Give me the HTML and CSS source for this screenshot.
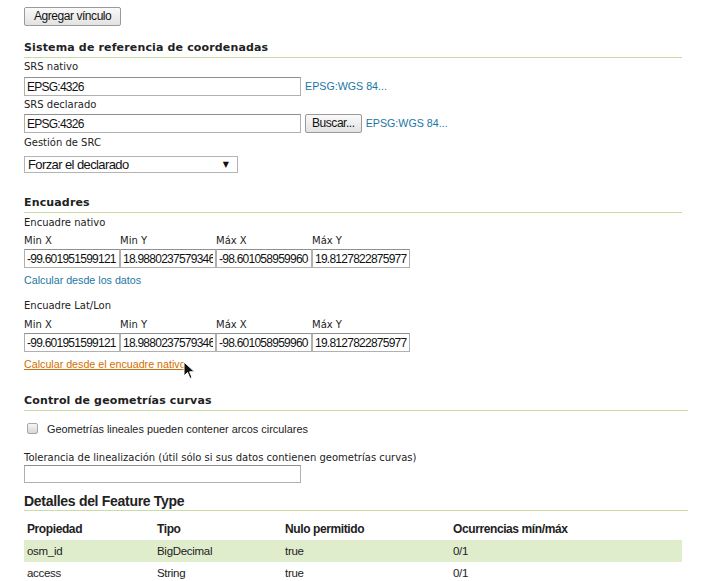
FILE: index.html
```html
<!DOCTYPE html>
<html lang="es">
<head>
<meta charset="utf-8">
<title>Feature Type</title>
<link rel="stylesheet" href="styles.css">
</head>
<body>
<div class="page">
  <div class="top"><button class="btn">Agregar vínculo</button></div>

  <section class="sec s1">
    <h3 class="head">Sistema de referencia de coordenadas</h3>
    <div class="lbl first">SRS nativo</div>
    <div class="row"><input class="txt wide" value="EPSG:4326"><a class="lnk" href="#">EPSG:WGS 84...</a></div>
    <div class="lbl">SRS declarado</div>
    <div class="row"><input class="txt wide" value="EPSG:4326"><button class="btn small">Buscar...</button><a class="lnk" href="#">EPSG:WGS 84...</a></div>
    <div class="lbl gest">Gestión de SRC</div>
    <div class="sel"><span>Forzar el declarado</span><span class="arrow">▼</span></div>
  </section>

  <section class="sec s2">
    <h3 class="head">Encuadres</h3>
    <div class="lbl first">Encuadre nativo</div>
    <div class="bbox">
      <div class="cell"><div class="clbl">Min X</div><input class="txt num" value="-99.601951599121"></div>
      <div class="cell"><div class="clbl">Min Y</div><input class="txt num" value="18.988023757934612"></div>
      <div class="cell"><div class="clbl">Máx X</div><input class="txt num" value="-98.601058959960"></div>
      <div class="cell"><div class="clbl">Máx Y</div><input class="txt num" value="19.812782287597713"></div>
    </div>
    <div class="calcrow"><a class="lnk" href="#">Calcular desde los datos</a></div>
    <div class="lbl ll">Encuadre Lat/Lon</div>
    <div class="bbox b2">
      <div class="cell"><div class="clbl">Min X</div><input class="txt num" value="-99.601951599121"></div>
      <div class="cell"><div class="clbl">Min Y</div><input class="txt num" value="18.988023757934612"></div>
      <div class="cell"><div class="clbl">Máx X</div><input class="txt num" value="-98.601058959960"></div>
      <div class="cell"><div class="clbl">Máx Y</div><input class="txt num" value="19.812782287597713"></div>
    </div>
    <div class="calcrow hoverwrap">
      <a class="lnk hover" href="#">Calcular desde el encuadre nativo</a>
      <svg class="cursor" width="13" height="19" viewBox="0 0 13 19"><path d="M1 1 L1 15 L4.5 11.5 L7 17.5 L9 16.5 L6.6 10.8 L11.5 10.8 Z" fill="#111" stroke="#fff" stroke-width="1"/></svg>
    </div>
  </section>

  <section class="sec s3">
    <h3 class="head">Control de geometrías curvas</h3>
    <label class="chk"><span class="box"></span>Geometrías lineales pueden contener arcos circulares</label>
    <div class="lbl tol">Tolerancia de linealización (útil sólo si sus datos contienen geometrías curvas)</div>
    <input class="txt wide tin" value="">
  </section>

  <section class="sec s4">
    <h3 class="head narrow">Detalles del Feature Type</h3>
    <table class="tbl">
      <thead><tr><th>Propiedad</th><th>Tipo</th><th>Nulo permitido</th><th>Ocurrencias mín/máx</th></tr></thead>
      <tbody>
        <tr class="odd"><td>osm_id</td><td>BigDecimal</td><td>true</td><td>0/1</td></tr>
        <tr><td>access</td><td>String</td><td>true</td><td>0/1</td></tr>
      </tbody>
    </table>
  </section>
</div>
</body>
</html>
```

FILE: styles.css
```css
html, body {
  margin: 0;
  padding: 0;
  background: #fff;
}
body {
  font-family: "DejaVu Sans", sans-serif;
  color: #222;
  overflow: hidden;
}
.page {
  padding: 7px 0 0 24px;
  width: 664px;
}
.top { height: 19px; }
.btn {
  display: block;
  font-family: "Liberation Sans", sans-serif;
  font-size: 12px;
  letter-spacing: -0.45px;
  color: #111;
  background: linear-gradient(#fafafa, #e2e2e2);
  border: 1px solid #9a9a9a;
  border-radius: 2px;
  height: 19px;
  padding: 0 9px;
  margin: 0;
  line-height: 15px;
}
.sec { width: 658px; }
.head {
  font-family: "DejaVu Sans", sans-serif;
  font-weight: bold;
  font-size: 11px;
  letter-spacing: 0.15px;
  color: #222;
  margin: 0;
  padding: 0 0 2px 0;
  border-bottom: 1px solid #c9dca4;
  line-height: 14px;
  height: 14px;
}
.s1 { margin-top: 15px; }
.lbl {
  font-size: 10px;
  line-height: 12px;
  height: 12px;
  color: #222;
  margin: 3px 0 3px;
}
.lbl.first { margin-top: 3px; margin-bottom: 4px; }
.lbl.gest { margin-top: 4px; margin-bottom: 7px; }
.row {
  display: flex;
  align-items: center;
  gap: 4px;
  height: 19px;
}
.txt {
  display: block;
  font-family: "Liberation Sans", sans-serif;
  font-size: 12px;
  letter-spacing: -0.75px;
  color: #111;
  border: 1px solid #b0b0b0;
  border-top-color: #8f8f8f;
  box-sizing: border-box;
  height: 19px;
  padding: 0 2px;
  margin: 0;
  background: #fff;
  outline: none;
}
.wide { width: 277px; }
.lnk {
  font-family: "Liberation Sans", sans-serif;
  font-size: 10.7px;
  line-height: 13px;
  color: #1a77a4;
  text-decoration: none;
}
.small { padding: 0 6px; }
.sel {
  width: 214px;
  height: 17px;
  box-sizing: border-box;
  border: 1px solid #b4b4b4;
  display: flex;
  align-items: center;
  justify-content: space-between;
  padding: 0 8px 0 3px;
  font-family: "Liberation Sans", sans-serif;
  font-size: 13px;
  letter-spacing: -0.6px;
  color: #111;
}
.arrow { font-size: 8px; font-family: "DejaVu Sans", sans-serif; letter-spacing: 0; }
.s2 { margin-top: 23px; }
.s2 .lbl.first { margin-top: 4px; margin-bottom: 0; }
.bbox {
  display: flex;
  margin-top: 6px;
}
.bbox.b2 { margin-top: 7px; }
.cell { width: 96px; }
.cell:last-child { width: 98px; }
.clbl {
  font-size: 10px;
  line-height: 12px;
  height: 12px;
  margin-bottom: 2px;
}
.num { width: 100%; }
.calcrow { margin-top: 4px; height: 13px; line-height: 13px; }
.lbl.ll { margin-top: 15px; margin-bottom: 0; }
.hoverwrap { position: relative; }
.hover { color: #d06f00; text-decoration: underline; }
.cursor { position: absolute; left: 159px; top: 5px; }
.s3 { margin-top: 25px; width: 664px; }
.chk {
  display: flex;
  align-items: center;
  height: 13px;
  font-family: "Liberation Sans", sans-serif;
  font-size: 10.9px;
  color: #222;
  margin: 11px 0 0 3px;
}
.box {
  width: 9px;
  height: 9px;
  border: 1px solid #a8a8a8;
  border-radius: 2px;
  background: linear-gradient(#f6f6f6, #d6d6d6);
  margin-right: 9px;
}
.lbl.tol { margin-top: 17px; margin-bottom: 1px; }
.tin { height: 18px; }
.s4 { margin-top: 11px; width: 664px; }
.narrow {
  font-family: "Liberation Sans", sans-serif;
  font-size: 14px;
  letter-spacing: -0.3px;
}
.tbl {
  width: 658px;
  border-collapse: collapse;
  margin-top: 0;
  font-family: "Liberation Sans", sans-serif;
  font-size: 11.5px;
  letter-spacing: -0.3px;
  color: #222;
}
.tbl th {
  text-align: left;
  font-weight: bold;
  font-size: 12px;
  letter-spacing: -0.4px;
  padding: 12px 3px 5px;
  line-height: 12px;
}
.tbl td { padding: 0 3px; height: 22px; line-height: 12px; }
.tbl th:nth-child(1) { width: 124px; }
.tbl th:nth-child(2) { width: 122px; }
.tbl th:nth-child(3) { width: 162px; }
.odd td { background: #e0edcd; }
```
